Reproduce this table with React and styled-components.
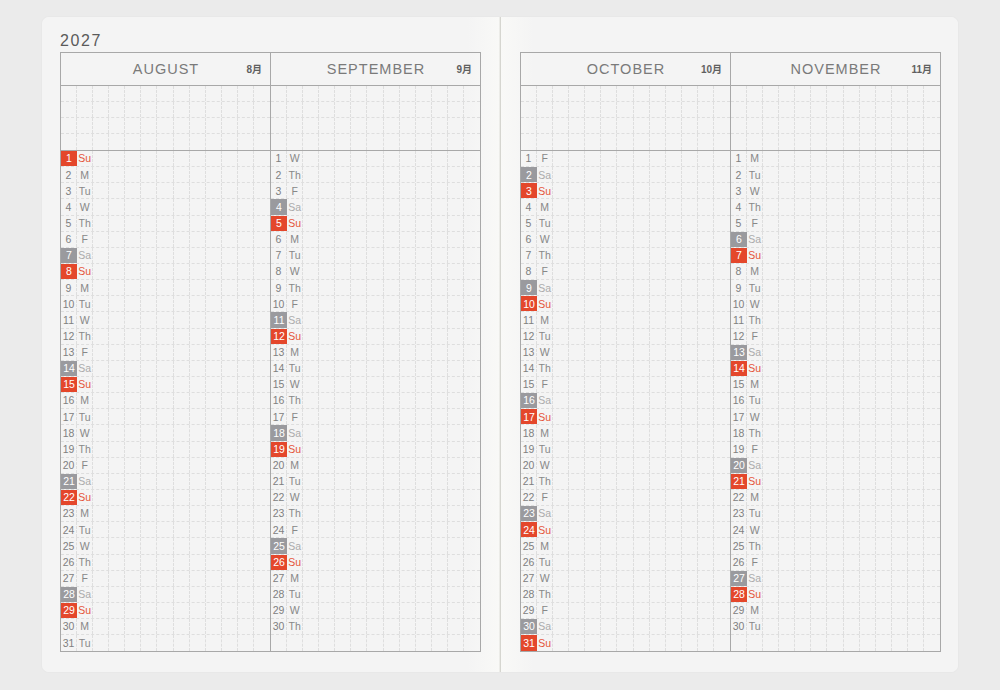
import React from "react";
import styled, { createGlobalStyle } from "styled-components";

const Global = createGlobalStyle`
  html, body { margin: 0; padding: 0; background: #ebebeb; }
  body { font-family: "Liberation Sans", Arial, sans-serif; }
`;

const GRID = "1px dashed #dedede";
const RULE = "1px solid #a8a8a8";

const Stage = styled.div`
  width: 1000px;
  height: 690px;
  padding: 17px 42px 0 42px;
  box-sizing: border-box;
  background: #ebebeb;
`;

const Spread = styled.div`
  display: flex;
  width: 916px;
  height: 655px;
  border-radius: 7px;
  background: #f4f4f4;
  box-shadow: 0 0 2px rgba(0, 0, 0, 0.06);
  overflow: hidden;
`;

const Page = styled.div`
  width: 458px;
  box-sizing: border-box;
  padding-left: ${(p) => (p.$side === "left" ? "18px" : "19px")};
  background: ${(p) =>
    p.$side === "left"
      ? "linear-gradient(to right, #f4f4f4 0%, #f4f4f4 93%, #f9f9f7 100%)"
      : "linear-gradient(to left, #f4f4f4 0%, #f4f4f4 93%, #f9f9f7 100%)"};
  border-right: ${(p) => (p.$side === "left" ? "1px solid #ecece8" : "none")};
  border-left: ${(p) => (p.$side === "right" ? "1px solid #d6d6d0" : "none")};
  display: flex;
  flex-direction: column;
`;

const YearRow = styled.div`
  height: 35px;
  box-sizing: border-box;
  padding-bottom: 3px;
  display: flex;
  align-items: flex-end;
`;

const Year = styled.span`
  font-size: 16px;
  line-height: 16px;
  letter-spacing: 1.6px;
  color: #5a5a5a;
`;

const Table = styled.div`
  display: flex;
  width: 421px;
  height: 600px;
  box-sizing: border-box;
  border: ${RULE};
`;

const Column = styled.div`
  flex: 1;
  display: flex;
  flex-direction: column;
  border-left: ${(p) => (p.$first ? "none" : RULE)};
`;

const Header = styled.div`
  height: 31.5px;
  flex-shrink: 0;
  border-bottom: ${RULE};
  display: grid;
  grid-template-columns: 1fr auto 1fr;
  align-items: center;
  padding: 0 8px;
`;

const MonthName = styled.span`
  grid-column: 2;
  font-size: 14.5px;
  letter-spacing: 1px;
  color: #7a7a7a;
  padding-left: 1px;
`;

const MonthKanji = styled.span`
  grid-column: 3;
  justify-self: end;
  font-family: "Liberation Sans", "Noto Sans CJK JP", sans-serif;
  font-size: 10px;
  font-weight: 700;
  color: #606060;
  margin-top: -1px;
`;

const Section = styled.div`
  display: flex;
  flex-direction: column;
  flex-shrink: 0;
  border-bottom: ${(p) => (p.$divided ? RULE : "none")};
`;

const Row = styled.div`
  display: grid;
  grid-template-columns: repeat(13, 1fr);
  height: 16.15px;
  flex-shrink: 0;
  box-sizing: border-box;
  border-bottom: ${(p) => (p.$last ? "none" : GRID)};
`;

const Cell = styled.div`
  box-sizing: border-box;
  border-right: ${(p) => (p.$last ? "none" : GRID)};
`;

const NumCell = styled.div`
  box-sizing: border-box;
  display: flex;
  align-items: center;
  justify-content: center;
  font-size: 10.5px;
  line-height: 1;
  color: ${(p) => (p.$kind ? "#ffffff" : "#808080")};
  background: ${(p) =>
    p.$kind === "su" ? "#e4472b" : p.$kind === "sa" ? "#9a9a9e" : "transparent"};
  border-right: ${(p) => (p.$kind ? "none" : GRID)};
`;

const DayCell = styled.div`
  box-sizing: border-box;
  display: flex;
  align-items: center;
  justify-content: center;
  font-size: 10.5px;
  line-height: 1;
  color: ${(p) => (p.$kind === "su" ? "#e5553a" : p.$kind === "sa" ? "#ababab" : "#888888")};
  border-right: ${GRID};
`;

const DAYS = ["Su", "M", "Tu", "W", "Th", "F", "Sa"];

const MONTHS = [
  { name: "AUGUST", kanji: "8月", m: 7 },
  { name: "SEPTEMBER", kanji: "9月", m: 8 },
  { name: "OCTOBER", kanji: "10月", m: 9 },
  { name: "NOVEMBER", kanji: "11月", m: 10 },
];

function EmptyCells({ from }) {
  const cells = [];
  for (let i = from; i < 13; i++) cells.push(<Cell key={i} $last={i === 12} />);
  return cells;
}

function MonthColumn({ month, first }) {
  const year = 2027;
  const daysInMonth = new Date(year, month.m + 1, 0).getDate();
  const rows = [];
  for (let d = 1; d <= 31; d++) {
    if (d <= daysInMonth) {
      const wd = new Date(year, month.m, d).getDay();
      const kind = wd === 0 ? "su" : wd === 6 ? "sa" : null;
      rows.push(
        <Row key={d} $last={d === 31}>
          <NumCell $kind={kind}>{d}</NumCell>
          <DayCell $kind={kind}>{DAYS[wd]}</DayCell>
          <EmptyCells from={2} />
        </Row>
      );
    } else {
      rows.push(
        <Row key={d} $last={d === 31}>
          <EmptyCells from={0} />
        </Row>
      );
    }
  }
  return (
    <Column $first={first}>
      <Header>
        <MonthName>{month.name}</MonthName>
        <MonthKanji>{month.kanji}</MonthKanji>
      </Header>
      <Section $divided>
        {[0, 1, 2, 3].map((i) => (
          <Row key={i} $last={i === 3}>
            <EmptyCells from={0} />
          </Row>
        ))}
      </Section>
      <Section>{rows}</Section>
    </Column>
  );
}

export default function App() {
  return (
    <>
      <Global />
      <Stage>
        <Spread>
          <Page $side="left">
            <YearRow>
              <Year>2027</Year>
            </YearRow>
            <Table>
              <MonthColumn month={MONTHS[0]} first />
              <MonthColumn month={MONTHS[1]} />
            </Table>
          </Page>
          <Page $side="right">
            <YearRow />
            <Table>
              <MonthColumn month={MONTHS[2]} first />
              <MonthColumn month={MONTHS[3]} />
            </Table>
          </Page>
        </Spread>
      </Stage>
    </>
  );
}
